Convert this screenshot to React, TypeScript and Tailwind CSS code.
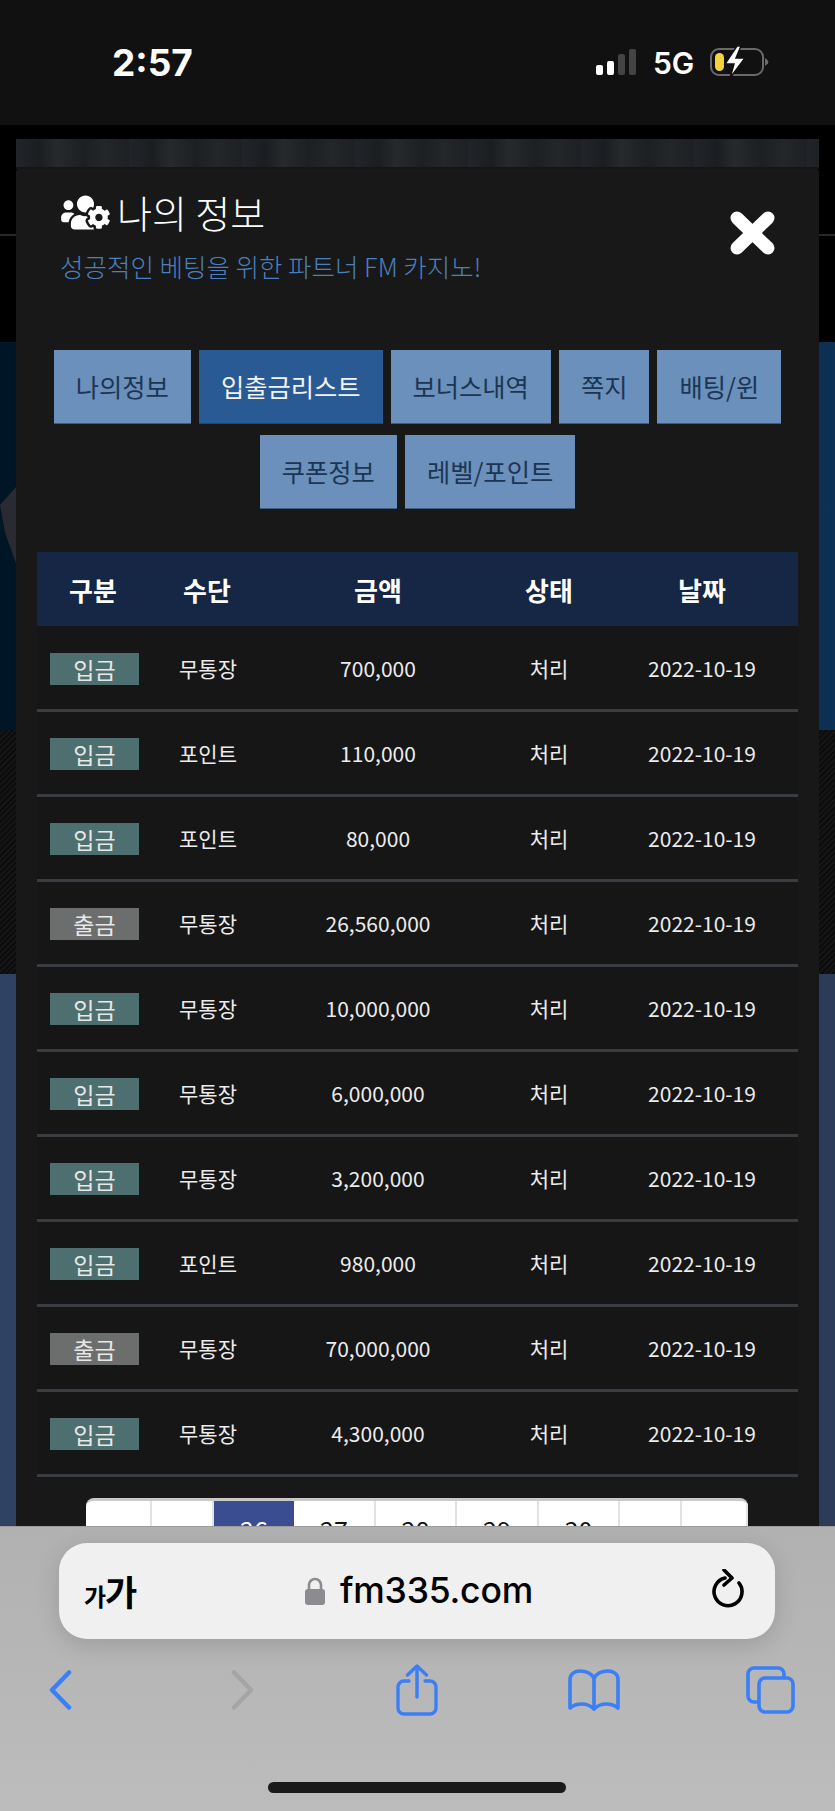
import { FaUsersCog } from 'react-icons/fa';

type Row = { kind: string; how: string; amount: string };

const tabs = ['나의정보', '입출금리스트', '보너스내역', '쪽지', '배팅/윈', '쿠폰정보', '레벨/포인트'];

const rows: Row[] = [
  { kind: '입금', how: '무통장', amount: '700,000' },
  { kind: '입금', how: '포인트', amount: '110,000' },
  { kind: '입금', how: '포인트', amount: '80,000' },
  { kind: '출금', how: '무통장', amount: '26,560,000' },
  { kind: '입금', how: '무통장', amount: '10,000,000' },
  { kind: '입금', how: '무통장', amount: '6,000,000' },
  { kind: '입금', how: '무통장', amount: '3,200,000' },
  { kind: '입금', how: '포인트', amount: '980,000' },
  { kind: '출금', how: '무통장', amount: '70,000,000' },
  { kind: '입금', how: '무통장', amount: '4,300,000' },
];

const pages = [
  { label: '', w: 'w-[66px]' },
  { label: '', w: 'w-[62px]' },
  { label: '26', w: 'w-[80px]', on: true },
  { label: '27', w: 'w-[82px]' },
  { label: '28', w: 'w-[81px]' },
  { label: '29', w: 'w-[82px]' },
  { label: '30', w: 'w-[81px]' },
  { label: '', w: 'w-[62px]' },
  { label: '', w: 'w-[66px]' },
];

function StatusBar() {
  return (
    <div className="h-[125px] shrink-0 bg-[#111111] flex items-start text-white font-['Inter',sans-serif]">
      <div className="ml-[112px] mt-[41px] w-[80px] whitespace-nowrap text-[37px] leading-[44px] font-bold">2:57</div>
      <div className="ml-[404px] mt-[49px] flex items-end gap-[4px] h-[26px]">
        <div className="w-[7px] h-[10px] rounded-[2px] bg-white" />
        <div className="w-[7px] h-[14px] rounded-[2px] bg-white" />
        <div className="w-[7px] h-[21px] rounded-[2px] bg-[#444444]" />
        <div className="w-[7px] h-[26px] rounded-[2px] bg-[#444444]" />
      </div>
      <div className="ml-[17px] mt-[44px] text-[30px] leading-[38px] font-semibold">5G</div>
      <svg className="ml-[16px] mt-[46px]" width="60" height="32" viewBox="0 0 60 32">
        <rect x="1" y="3" width="52" height="26" rx="8" fill="none" stroke="#6a6a6a" strokeWidth="2" />
        <rect x="5" y="7" width="9" height="18" rx="4.5" fill="#f5d33f" />
        <path d="M55 12 L58 14.5 Q58.6 16 58 17.5 L55 20 Z" fill="#6a6a6a" />
        <path d="M27 0 L15 18 L24 18 L20 32 L35 12 L26 12 L31 0 Z" fill="#ffffff" stroke="#111111" strokeWidth="1.5" />
      </svg>
    </div>
  );
}

// what shows of the page behind the popup, left and right of it
function Backdrop() {
  return (
    <div className="flex-1 flex flex-col">
      <div className="h-[111px] bg-black border-b-2 border-[#26282a]" />
      <div className="h-[106px] bg-black" />
      <div className="h-[388px] relative bg-gradient-to-r from-[#001526] via-[#06233f] to-[#0d3055]">
        <svg className="absolute left-0 top-[145px]" width="16" height="76" viewBox="0 0 16 76">
          <path d="M16 0 L0 18 L5 46 L16 76 Z" fill="#2a2a33" />
        </svg>
      </div>
      <div className="h-[244px] bg-[#0f0f0f] bg-[repeating-linear-gradient(135deg,#0c0c0c_0px,#0c0c0c_2px,#151515_2px,#151515_4px)]" />
      <div className="flex-1 bg-gradient-to-r from-[#2f4263] via-[#2a3c5b] to-[#2b3b58]" />
    </div>
  );
}

function TabButton({ label, active }: { label: string; active: boolean }) {
  return (
    <div
      className={
        active
          ? 'h-[74px] px-[22px] flex items-center text-[25.3px] bg-[#2a5a94] text-[#f2f2f2] border-b border-[#24466e]'
          : 'h-[74px] px-[22px] flex items-center text-[25.3px] bg-[#6a90bb] text-[#1d3554] border-b border-[#3e5d80]'
      }
    >
      {label}
    </div>
  );
}

function Popup() {
  return (
    <div className="absolute left-[16px] top-[139px] w-[803px] h-[1400px] font-['Noto_Sans_CJK_KR',sans-serif]">
      <div className="h-[30px] bg-[#1f2225] bg-[repeating-linear-gradient(90deg,#212529_0px,#1b1e21_23px,#272a2d_41px,#1d2023_67px,#24272a_89px,#1e2023_113px)] border-b-2 border-[#141516]" />
      <div className="h-[1370px] bg-[#181818] rounded-t-[3px]">
        <div className="flex justify-between">
          <div className="pl-[45px] pt-[17px]">
            <div className="flex items-center h-[52px] text-white">
              <FaUsersCog className="w-[49px] h-[39px]" />
              <span className="ml-[7px] text-[38px] leading-[52px] font-light">나의 정보</span>
            </div>
            <div className="mt-[9px] -ml-[1px] text-[25.5px] leading-[38px] font-light text-[#4a80bf]">
              성공적인 베팅을 위한 파트너 FM 카지노!
            </div>
          </div>
          <svg className="mt-[42px] mr-[44px]" width="45" height="44" viewBox="0 0 45 44">
            <path d="M7 7 L38 37 M38 7 L7 37" stroke="#ffffff" strokeWidth="13" strokeLinecap="round" />
          </svg>
        </div>

        <div className="mt-[65px] mx-[21px] flex flex-wrap justify-center gap-x-[8px] gap-y-[11px]">
          {tabs.map((t, i) => (
            <TabButton key={t} label={t} active={i === 1} />
          ))}
        </div>

        <div className="mt-[43px] mx-[21px]">
          <div className="grid grid-cols-[112px_116px_226px_116px_190px] h-[74px] items-center text-center text-[26px] font-bold text-white bg-[#152744]">
            <div>구분</div>
            <div>수단</div>
            <div>금액</div>
            <div>상태</div>
            <div>날짜</div>
          </div>
          <div className="pt-[1px] bg-[#161616]">
            {rows.map((r, i) => (
              <div
                key={i}
                className="grid grid-cols-[112px_116px_226px_116px_190px] h-[85px] items-center text-center text-[21px] text-[#ececec] border-b-[3px] border-[#393c40] pt-[2px]"
              >
                <div className="pl-[13px]">
                  <div
                    className={
                      r.kind === '입금'
                        ? 'w-[89px] h-[32px] flex items-center justify-center text-[23px] text-[#e8e8e8] bg-[#4d6f6f]'
                        : 'w-[89px] h-[32px] flex items-center justify-center text-[23px] text-[#e8e8e8] bg-[#6c6e6e]'
                    }
                  >
                    {r.kind}
                  </div>
                </div>
                <div className="pl-[2px]">{r.how}</div>
                <div>{r.amount}</div>
                <div>처리</div>
                <div>2022-10-19</div>
              </div>
            ))}
          </div>

          <div className="mt-[21px] ml-[49px] w-[662px] h-[70px] flex bg-white rounded-t-[8px] border-t-[3px] border-[#c9c9c9] overflow-hidden">
            {pages.map((p, i) => (
              <div
                key={i}
                className={
                  p.on
                    ? `${p.w} shrink-0 text-center text-[25px] leading-[57px] text-white bg-[#3a4d90]`
                    : `${p.w} shrink-0 text-center text-[25px] leading-[57px] text-[#111111] border-r-2 border-[#e2e2e2]`
                }
              >
                {p.label}
              </div>
            ))}
          </div>
        </div>
      </div>
    </div>
  );
}

function BrowserBar() {
  return (
    <div className="absolute left-0 top-[1526px] w-[835px] h-[285px] bg-gradient-to-b from-[#b1b1b1] to-[#bcbcbc] border-t border-[#9c9c9c]">
      <div className="mt-[16px] ml-[59px] w-[716px] h-[96px] rounded-[28px] bg-[#f0f0f0] shadow-[0_6px_24px_rgba(0,0,0,0.14)] flex items-center relative text-black">
        <div className="ml-[25px] w-[56px] flex items-baseline whitespace-nowrap font-['Noto_Sans_CJK_KR',sans-serif] font-semibold">
          <span className="text-[24px]">가</span>
          <span className="text-[35px] -ml-[1px]">가</span>
        </div>
        <svg className="ml-[165px]" width="20" height="28" viewBox="0 0 20 28">
          <path d="M4 13 V8 a6 6 0 0 1 12 0 V13" fill="none" stroke="#8b8b90" strokeWidth="2.6" />
          <rect x="0" y="12" width="20" height="16" rx="3" fill="#8b8b90" />
        </svg>
        <span className="ml-[15px] text-[35.5px] font-medium font-['Inter',sans-serif] tracking-[-0.2px]">fm335.com</span>
        <svg className="absolute left-[652px] top-[26px]" width="36" height="42" viewBox="0 0 36 42">
          <path d="M14 9 A14 14 0 1 0 28 14" fill="none" stroke="#000000" strokeWidth="3.6" strokeLinecap="round" />
          <path d="M13 1 L21 9 L13 16" fill="none" stroke="#000000" strokeWidth="3.6" strokeLinecap="round" strokeLinejoin="round" />
        </svg>
      </div>

      <div className="mt-[25px] ml-[49px] flex items-center h-[52px]">
        <svg width="23" height="40" viewBox="0 0 23 40">
          <path d="M20 2.5 L3 20 L20 37.5" fill="none" stroke="#3a7ff6" strokeWidth="4.5" strokeLinecap="round" strokeLinejoin="round" />
        </svg>
        <svg className="ml-[159px]" width="23" height="40" viewBox="0 0 23 40">
          <path d="M3 2.5 L20 20 L3 37.5" fill="none" stroke="#a5a5a5" strokeWidth="4.5" strokeLinecap="round" strokeLinejoin="round" />
        </svg>
        <svg className="ml-[142px]" width="42" height="52" viewBox="0 0 42 52" fill="none" stroke="#3a7ff6" strokeWidth="3.4" strokeLinecap="round" strokeLinejoin="round">
          <path d="M13 17 H8 a6 6 0 0 0 -6 6 V44 a6 6 0 0 0 6 6 H34 a6 6 0 0 0 6 -6 V23 a6 6 0 0 0 -6 -6 H29" />
          <path d="M21 33 V2 M11.5 11 L21 2 L30.5 11" />
        </svg>
        <svg className="ml-[130px]" width="52" height="42" viewBox="0 0 52 42" fill="none" stroke="#3a7ff6" strokeWidth="3.6" strokeLinecap="round" strokeLinejoin="round">
          <path d="M26 9 C23 4 18 2 12 2 C7 2 2 5 2 10 V39 C8 34 19 33 26 40 C33 33 44 34 50 39 V10 C50 5 45 2 40 2 C34 2 29 4 26 9 Z" />
          <path d="M26 9 V40" />
        </svg>
        <svg className="ml-[126px]" width="49" height="48" viewBox="0 0 49 48" fill="none" stroke="#3a7ff6" strokeWidth="3.6" strokeLinejoin="round">
          <path d="M12 36 H8 a6 6 0 0 1 -6 -6 V8 a6 6 0 0 1 6 -6 H32 a6 6 0 0 1 6 6 V12" />
          <rect x="13" y="12" width="34" height="34" rx="6" />
        </svg>
      </div>

      <div className="mt-[66px] ml-[268px] w-[298px] h-[11px] rounded-full bg-[#1a1a1a]" />
    </div>
  );
}

export default function App() {
  return (
    <div className="relative w-[835px] h-[1811px] overflow-hidden bg-black flex flex-col">
      <StatusBar />
      <Backdrop />
      <Popup />
      <BrowserBar />
    </div>
  );
}
